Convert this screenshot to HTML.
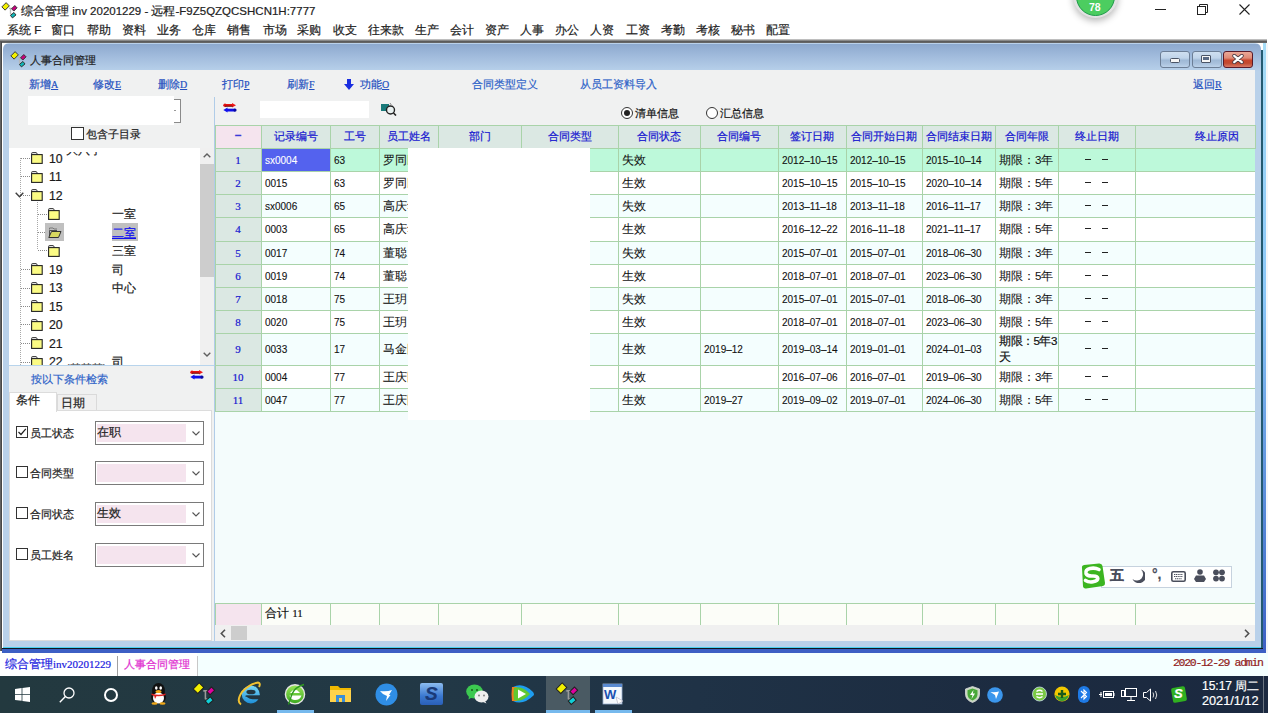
<!DOCTYPE html><html><head><meta charset="utf-8"><style>
*{box-sizing:border-box;margin:0;padding:0}
html,body{width:1268px;height:713px;overflow:hidden;background:#fff}
body{position:relative;font-family:"Liberation Sans",sans-serif;font-size:12px;color:#000}
.ab{position:absolute}
.t{position:absolute;white-space:nowrap;line-height:1;-webkit-text-stroke:0.2px currentColor}
.lnk{color:#2a55b8}
.u{text-decoration:underline}
</style></head><body>
<svg class="ab" style="left:1px;top:2px" width="17" height="17" viewBox="0 0 17 17"><path d="M8 6.3 H11.5 M9.5 6.3 V11.8 L11.3 12.6" stroke="#b8b8b8" stroke-width="1.3" fill="none"/><rect x="1.6" y="2.1" width="6" height="4.6" transform="rotate(-45 4.6 4.4)" fill="#f2f000" stroke="#303030" stroke-width="0.9"/><rect x="11" y="4.7" width="4.6" height="3.2" transform="rotate(-45 13.3 6.3)" fill="#c8007e" stroke="#303030" stroke-width="0.9"/><rect x="9.9" y="11.6" width="4.6" height="3.2" transform="rotate(-40 12.2 13.2)" fill="#10b8b8" stroke="#303030" stroke-width="0.9"/></svg>
<div class="t" style="left:21px;top:6px;font-size:11.5px;color:#222">综合管理 inv 20201229 - 远程-F9Z5QZQCSHCN1H:7777</div>
<div class="ab" style="left:1073px;top:-26.6px;width:44.8px;height:44.8px;border-radius:50%;background:#e2e2e2;box-shadow:0 3px 7px rgba(0,0,0,.28)"></div>
<div class="ab" style="left:1075.6px;top:-24px;width:39.6px;height:39.6px;border-radius:50%;background:#4ccd60;border:1px solid #1e9a4a"></div>
<div class="t" style="left:1089px;top:1.8px;font-size:10.5px;font-weight:bold;color:#fff;-webkit-text-stroke:0">78</div>
<div class="ab" style="left:1155px;top:9px;width:11px;height:1px;background:#222"></div>
<svg class="ab" style="left:1197px;top:4px" width="11" height="11"><rect x="0.5" y="2.5" width="8" height="8" fill="none" stroke="#222"/><path d="M2.5 2.5 V0.5 H10.5 V8.5 H8.5" fill="none" stroke="#222"/></svg>
<svg class="ab" style="left:1239px;top:4px" width="11" height="11"><path d="M0.5 0.5 L10.5 10.5 M10.5 0.5 L0.5 10.5" stroke="#222" stroke-width="1.1"/></svg>
<div class="t" style="left:7px;top:25px;font-size:11.5px;color:#222">系统 F</div>
<div class="t" style="left:51px;top:25px;font-size:11.5px;color:#222">窗口</div>
<div class="t" style="left:87px;top:25px;font-size:11.5px;color:#222">帮助</div>
<div class="t" style="left:122px;top:25px;font-size:11.5px;color:#222">资料</div>
<div class="t" style="left:157px;top:25px;font-size:11.5px;color:#222">业务</div>
<div class="t" style="left:192px;top:25px;font-size:11.5px;color:#222">仓库</div>
<div class="t" style="left:227px;top:25px;font-size:11.5px;color:#222">销售</div>
<div class="t" style="left:263px;top:25px;font-size:11.5px;color:#222">市场</div>
<div class="t" style="left:297px;top:25px;font-size:11.5px;color:#222">采购</div>
<div class="t" style="left:333px;top:25px;font-size:11.5px;color:#222">收支</div>
<div class="t" style="left:368px;top:25px;font-size:11.5px;color:#222">往来款</div>
<div class="t" style="left:415px;top:25px;font-size:11.5px;color:#222">生产</div>
<div class="t" style="left:450px;top:25px;font-size:11.5px;color:#222">会计</div>
<div class="t" style="left:485px;top:25px;font-size:11.5px;color:#222">资产</div>
<div class="t" style="left:520px;top:25px;font-size:11.5px;color:#222">人事</div>
<div class="t" style="left:555px;top:25px;font-size:11.5px;color:#222">办公</div>
<div class="t" style="left:590px;top:25px;font-size:11.5px;color:#222">人资</div>
<div class="t" style="left:626px;top:25px;font-size:11.5px;color:#222">工资</div>
<div class="t" style="left:661px;top:25px;font-size:11.5px;color:#222">考勤</div>
<div class="t" style="left:696px;top:25px;font-size:11.5px;color:#222">考核</div>
<div class="t" style="left:731px;top:25px;font-size:11.5px;color:#222">秘书</div>
<div class="t" style="left:766px;top:25px;font-size:11.5px;color:#222">配置</div>
<div class="ab" style="left:0;top:39px;width:1267px;height:4px;background:linear-gradient(#d8d8d8,#5a5a5a 60%,#6a6a6a)"></div>
<div class="ab" style="left:1263px;top:43px;width:3px;height:610px;background:linear-gradient(#a6dcf6 0px,#8cc8f8 250px,#4a78d0 530px,#3d5fc4 610px)"></div><div class="ab" style="left:1266px;top:43px;width:2px;height:610px;background:#f4f6f8"></div>
<div class="ab" style="left:1261px;top:50px;width:2px;height:598px;background:#245a70"></div><div class="ab" style="left:1260px;top:50px;width:1px;height:597px;background:#92d6f2"></div>
<div class="ab" style="left:0;top:42px;width:2px;height:609px;background:linear-gradient(90deg,#707070,#3a3a3a)"></div>
<div class="ab" style="left:3px;top:43px;width:1258px;height:604px;border-radius:6px 6px 0 0;background:linear-gradient(#d0e4f8 0px,#8eaacf 1.5px,#a2bcdd 14px,#b6cfe9 27px,#b9d1ea 28px,#b9d1ea 100%)"></div>
<div class="ab" style="left:3px;top:647px;width:1258px;height:1px;background:#4cd0f0"></div>
<div class="ab" style="left:2px;top:648px;width:1261px;height:1px;background:#101820"></div>
<div class="ab" style="left:2px;top:649px;width:1264px;height:4px;background:#3d5fc4"></div>
<svg class="ab" style="left:10px;top:51px" width="17" height="17" viewBox="0 0 17 17"><path d="M8 6.3 H11.5 M9.5 6.3 V11.8 L11.3 12.6" stroke="#b8b8b8" stroke-width="1.3" fill="none"/><rect x="1.6" y="2.1" width="6" height="4.6" transform="rotate(-45 4.6 4.4)" fill="#f2f000" stroke="#303030" stroke-width="0.9"/><rect x="11" y="4.7" width="4.6" height="3.2" transform="rotate(-45 13.3 6.3)" fill="#c8007e" stroke="#303030" stroke-width="0.9"/><rect x="9.9" y="11.6" width="4.6" height="3.2" transform="rotate(-40 12.2 13.2)" fill="#10b8b8" stroke="#303030" stroke-width="0.9"/></svg>
<div class="t" style="left:30px;top:54.5px;font-size:11.3px;color:#1e1e1e">人事合同管理</div>
<div class="ab" style="left:1160px;top:51px;width:30px;height:17px;border:1px solid #6c7e96;border-radius:3px;background:linear-gradient(#cfdff0 0%,#c0d4ea 40%,#9fb9d6 55%,#a8c0dc 75%,#bcd2ea 100%)"></div><div class="ab" style="left:1170px;top:58px;width:10px;height:5px;background:#f6f6f6;border:1px solid #4a5466;border-radius:1.5px"></div>
<div class="ab" style="left:1192px;top:51px;width:30px;height:17px;border:1px solid #6c7e96;border-radius:3px;background:linear-gradient(#cfdff0 0%,#c0d4ea 40%,#9fb9d6 55%,#a8c0dc 75%,#bcd2ea 100%)"></div><div class="ab" style="left:1201px;top:55px;width:10px;height:8px;background:#f6f6f6;border:1px solid #4a5466;border-radius:1px"><div style="margin:1px 1px;height:3px;background:#5a6a84"></div></div>
<div class="ab" style="left:1223px;top:51px;width:30px;height:17px;border:1px solid #5a1a28;border-radius:3px;background:linear-gradient(#eba898 0%,#e08a76 40%,#c8452c 55%,#c24a30 75%,#d87a68 100%)"></div><svg class="ab" style="left:1232px;top:54px" width="12" height="10" viewBox="0 0 12 10"><path d="M2.2 1.8 L9.8 8.2 M9.8 1.8 L2.2 8.2" stroke="#4a3a44" stroke-width="3.8" stroke-linecap="round"/><path d="M2.2 1.8 L9.8 8.2 M9.8 1.8 L2.2 8.2" stroke="#fff" stroke-width="2.2" stroke-linecap="round"/></svg>
<div class="ab" style="left:9px;top:70px;width:1246px;height:571px;background:#f0f1f1"></div>
<div class="t lnk" style="left:29px;top:79px;font-size:11.3px;color:#2350c0">新增<span class="u" style="font-family:'Liberation Serif', serif;font-size:10px">A</span></div>
<div class="t lnk" style="left:93px;top:79px;font-size:11.3px;color:#2350c0">修改<span class="u" style="font-family:'Liberation Serif', serif;font-size:10px">E</span></div>
<div class="t lnk" style="left:158px;top:79px;font-size:11.3px;color:#2350c0">删除<span class="u" style="font-family:'Liberation Serif', serif;font-size:10px">D</span></div>
<div class="t lnk" style="left:222px;top:79px;font-size:11.3px;color:#2350c0">打印<span class="u" style="font-family:'Liberation Serif', serif;font-size:10px">P</span></div>
<div class="t lnk" style="left:287px;top:79px;font-size:11.3px;color:#2350c0">刷新<span class="u" style="font-family:'Liberation Serif', serif;font-size:10px">F</span></div>
<svg class="ab" style="left:344px;top:79px" width="10" height="11" viewBox="0 0 10 11"><path d="M3 0 H7 V5 H10 L5 11 L0 5 H3 Z" fill="#1a2ee0"/></svg>
<div class="t lnk" style="left:360px;top:79px;font-size:11.3px;color:#2350c0">功能<span class="u" style="font-family:'Liberation Serif', serif;font-size:10px">O</span></div>
<div class="t" style="left:472px;top:79px;font-size:10.8px;color:#2d62c8">合同类型定义</div>
<div class="t" style="left:580px;top:79px;font-size:10.9px;color:#2d62c8">从员工资料导入</div>
<div class="t lnk" style="left:1193px;top:79px;font-size:11.3px;color:#2350c0">返回<span class="u" style="font-family:'Liberation Serif', serif;font-size:10px">R</span></div>
<div class="ab" style="left:28px;top:96px;width:146px;height:29px;background:#fff"></div>
<div class="ab" style="left:174px;top:99px;width:7px;height:24px;border:1px solid #8a8a8a;border-left:none;background:#fff"></div>
<div class="ab" style="left:174px;top:110px;width:2px;height:1px;background:#999"></div>
<div class="ab" style="left:71px;top:127px;width:13px;height:13px;border:1px solid #333;background:#fff"></div>
<div class="t" style="left:86px;top:129px;font-size:10.8px;color:#222">包含子目录</div>
<svg class="ab" style="left:223px;top:103px" width="14" height="10" viewBox="0 0 14 10"><path d="M2 2.3 H10" stroke="#e81010" stroke-width="2.6"/><path d="M9 0 L13 2.3 L9 4.6Z" fill="#f01818"/><circle cx="2" cy="2.3" r="1.7" fill="#e01010"/><path d="M2.2 3.2 H9.5" stroke="#401010" stroke-width="0.8"/><path d="M4 7.1 H12" stroke="#1010e8" stroke-width="2.8"/><path d="M4.5 4.6 L0.3 7.1 L4.5 9.6Z" fill="#1010f0"/><circle cx="12" cy="7.1" r="1.6" fill="#0808a0"/></svg>
<div class="ab" style="left:260px;top:101px;width:109px;height:17px;background:#fff"></div>
<svg class="ab" style="left:381px;top:102px" width="16" height="14" viewBox="0 0 16 14"><rect x="0" y="2" width="8" height="7" fill="#1a7a7a"/><circle cx="9.5" cy="8" r="4" fill="#e8f0f0" stroke="#222" stroke-width="1.4"/><path d="M12.5 11 L15 13.5" stroke="#222" stroke-width="1.6"/><path d="M9 1 L11 4" stroke="#888"/></svg>
<div class="ab" style="left:621px;top:107px;width:12px;height:12px;border-radius:50%;border:1px solid #333;background:#fff"></div><div class="ab" style="left:624px;top:110px;width:6px;height:6px;border-radius:50%;background:#222"></div>
<div class="t" style="left:635px;top:107.5px;font-size:11px;color:#111">清单信息</div>
<div class="ab" style="left:706px;top:107px;width:12px;height:12px;border-radius:50%;border:1px solid #333;background:#fff"></div>
<div class="t" style="left:720px;top:107.5px;font-size:11px;color:#111">汇总信息</div>
<div class="ab" style="left:214px;top:97px;width:1px;height:544px;background:#b0cce8"></div>
<div class="ab" style="left:9px;top:148px;width:191px;height:217px;background:#fff;overflow:hidden">
<div class="ab" style="left:11px;top:10px;width:1px;height:207px;background:repeating-linear-gradient(180deg,#a8a8a8 0 1px,transparent 1px 2px)"></div>
<div class="ab" style="left:28px;top:54px;width:1px;height:48px;background:repeating-linear-gradient(180deg,#a8a8a8 0 1px,transparent 1px 2px)"></div>
<div class="ab" style="left:12px;top:10px;width:9px;height:1px;background:repeating-linear-gradient(90deg,#8a8a8a 0 1px,transparent 1px 2px)"></div>
<svg class="ab" style="left:22px;top:4.4px" width="12" height="12" viewBox="0 0 12 12"><path d="M0.7 2.6 V1.2 Q0.7 0.6 1.3 0.6 H5.2 Q5.8 0.6 6.4 2.6" fill="#f4f4f4" stroke="#333" stroke-width="1"/><rect x="0.6" y="2.6" width="10.6" height="8.8" fill="#fbfb84" stroke="#222" stroke-width="1.1"/></svg>
<div class="t" style="left:40px;top:4.7px;font-size:12.3px;color:#1a1a1a">10</div>
<div class="ab" style="left:12px;top:28px;width:9px;height:1px;background:repeating-linear-gradient(90deg,#8a8a8a 0 1px,transparent 1px 2px)"></div>
<svg class="ab" style="left:22px;top:22.9px" width="12" height="12" viewBox="0 0 12 12"><path d="M0.7 2.6 V1.2 Q0.7 0.6 1.3 0.6 H5.2 Q5.8 0.6 6.4 2.6" fill="#f4f4f4" stroke="#333" stroke-width="1"/><rect x="0.6" y="2.6" width="10.6" height="8.8" fill="#fbfb84" stroke="#222" stroke-width="1.1"/></svg>
<div class="t" style="left:40px;top:23.2px;font-size:12.3px;color:#1a1a1a">11</div>
<div class="ab" style="left:12px;top:47px;width:9px;height:1px;background:repeating-linear-gradient(90deg,#8a8a8a 0 1px,transparent 1px 2px)"></div>
<svg class="ab" style="left:22px;top:41.4px" width="12" height="12" viewBox="0 0 12 12"><path d="M0.7 2.6 V1.2 Q0.7 0.6 1.3 0.6 H5.2 Q5.8 0.6 6.4 2.6" fill="#f4f4f4" stroke="#333" stroke-width="1"/><rect x="0.6" y="2.6" width="10.6" height="8.8" fill="#fbfb84" stroke="#222" stroke-width="1.1"/></svg>
<div class="t" style="left:40px;top:41.7px;font-size:12.3px;color:#1a1a1a">12</div>
<div class="ab" style="left:29px;top:66px;width:9px;height:1px;background:repeating-linear-gradient(90deg,#8a8a8a 0 1px,transparent 1px 2px)"></div>
<svg class="ab" style="left:39px;top:59.9px" width="12" height="12" viewBox="0 0 12 12"><path d="M0.7 2.6 V1.2 Q0.7 0.6 1.3 0.6 H5.2 Q5.8 0.6 6.4 2.6" fill="#f4f4f4" stroke="#333" stroke-width="1"/><rect x="0.6" y="2.6" width="10.6" height="8.8" fill="#fbfb84" stroke="#222" stroke-width="1.1"/></svg>
<div class="t" style="left:103px;top:61.2px;font-size:11.5px;color:#222">一室</div>
<div class="ab" style="left:29px;top:84px;width:9px;height:1px;background:repeating-linear-gradient(90deg,#8a8a8a 0 1px,transparent 1px 2px)"></div>
<div class="ab" style="left:36px;top:75.0px;width:19px;height:18px;background:#c0c0c0"></div>
<svg class="ab" style="left:39px;top:78.5px" width="14" height="12" viewBox="0 0 14 12"><path d="M1.5 2.5 V1 H5 L6 2 H9" fill="none" stroke="#777" stroke-width="1"/><path d="M0.8 10.5 L3.5 4.5 H13 L10.5 10.5 Z" fill="#d8d860" stroke="#333" stroke-width="1"/><path d="M1.5 9 V3.5 H9" fill="none" stroke="#333" stroke-width="0.8"/></svg>
<div class="ab" style="left:103px;top:75.0px;width:26px;height:18px;background:#c0c0c0"></div>
<div class="t" style="left:103px;top:79.7px;font-size:11.5px;color:#1010f0;text-decoration:underline">二室</div>
<div class="ab" style="left:29px;top:102px;width:9px;height:1px;background:repeating-linear-gradient(90deg,#8a8a8a 0 1px,transparent 1px 2px)"></div>
<svg class="ab" style="left:39px;top:96.9px" width="12" height="12" viewBox="0 0 12 12"><path d="M0.7 2.6 V1.2 Q0.7 0.6 1.3 0.6 H5.2 Q5.8 0.6 6.4 2.6" fill="#f4f4f4" stroke="#333" stroke-width="1"/><rect x="0.6" y="2.6" width="10.6" height="8.8" fill="#fbfb84" stroke="#222" stroke-width="1.1"/></svg>
<div class="t" style="left:103px;top:98.2px;font-size:11.5px;color:#222">三室</div>
<div class="ab" style="left:12px;top:121px;width:9px;height:1px;background:repeating-linear-gradient(90deg,#8a8a8a 0 1px,transparent 1px 2px)"></div>
<svg class="ab" style="left:22px;top:115.4px" width="12" height="12" viewBox="0 0 12 12"><path d="M0.7 2.6 V1.2 Q0.7 0.6 1.3 0.6 H5.2 Q5.8 0.6 6.4 2.6" fill="#f4f4f4" stroke="#333" stroke-width="1"/><rect x="0.6" y="2.6" width="10.6" height="8.8" fill="#fbfb84" stroke="#222" stroke-width="1.1"/></svg>
<div class="t" style="left:40px;top:115.7px;font-size:12.3px;color:#1a1a1a">19</div>
<div class="t" style="left:103px;top:116.7px;font-size:11.5px;color:#222">司</div>
<div class="ab" style="left:12px;top:140px;width:9px;height:1px;background:repeating-linear-gradient(90deg,#8a8a8a 0 1px,transparent 1px 2px)"></div>
<svg class="ab" style="left:22px;top:133.9px" width="12" height="12" viewBox="0 0 12 12"><path d="M0.7 2.6 V1.2 Q0.7 0.6 1.3 0.6 H5.2 Q5.8 0.6 6.4 2.6" fill="#f4f4f4" stroke="#333" stroke-width="1"/><rect x="0.6" y="2.6" width="10.6" height="8.8" fill="#fbfb84" stroke="#222" stroke-width="1.1"/></svg>
<div class="t" style="left:40px;top:134.2px;font-size:12.3px;color:#1a1a1a">13</div>
<div class="t" style="left:103px;top:135.2px;font-size:11.5px;color:#222">中心</div>
<div class="ab" style="left:12px;top:158px;width:9px;height:1px;background:repeating-linear-gradient(90deg,#8a8a8a 0 1px,transparent 1px 2px)"></div>
<svg class="ab" style="left:22px;top:152.4px" width="12" height="12" viewBox="0 0 12 12"><path d="M0.7 2.6 V1.2 Q0.7 0.6 1.3 0.6 H5.2 Q5.8 0.6 6.4 2.6" fill="#f4f4f4" stroke="#333" stroke-width="1"/><rect x="0.6" y="2.6" width="10.6" height="8.8" fill="#fbfb84" stroke="#222" stroke-width="1.1"/></svg>
<div class="t" style="left:40px;top:152.7px;font-size:12.3px;color:#1a1a1a">15</div>
<div class="ab" style="left:12px;top:176px;width:9px;height:1px;background:repeating-linear-gradient(90deg,#8a8a8a 0 1px,transparent 1px 2px)"></div>
<svg class="ab" style="left:22px;top:170.9px" width="12" height="12" viewBox="0 0 12 12"><path d="M0.7 2.6 V1.2 Q0.7 0.6 1.3 0.6 H5.2 Q5.8 0.6 6.4 2.6" fill="#f4f4f4" stroke="#333" stroke-width="1"/><rect x="0.6" y="2.6" width="10.6" height="8.8" fill="#fbfb84" stroke="#222" stroke-width="1.1"/></svg>
<div class="t" style="left:40px;top:171.2px;font-size:12.3px;color:#1a1a1a">20</div>
<div class="ab" style="left:12px;top:195px;width:9px;height:1px;background:repeating-linear-gradient(90deg,#8a8a8a 0 1px,transparent 1px 2px)"></div>
<svg class="ab" style="left:22px;top:189.4px" width="12" height="12" viewBox="0 0 12 12"><path d="M0.7 2.6 V1.2 Q0.7 0.6 1.3 0.6 H5.2 Q5.8 0.6 6.4 2.6" fill="#f4f4f4" stroke="#333" stroke-width="1"/><rect x="0.6" y="2.6" width="10.6" height="8.8" fill="#fbfb84" stroke="#222" stroke-width="1.1"/></svg>
<div class="t" style="left:40px;top:189.7px;font-size:12.3px;color:#1a1a1a">21</div>
<div class="ab" style="left:12px;top:214px;width:9px;height:1px;background:repeating-linear-gradient(90deg,#8a8a8a 0 1px,transparent 1px 2px)"></div>
<svg class="ab" style="left:22px;top:207.9px" width="12" height="12" viewBox="0 0 12 12"><path d="M0.7 2.6 V1.2 Q0.7 0.6 1.3 0.6 H5.2 Q5.8 0.6 6.4 2.6" fill="#f4f4f4" stroke="#333" stroke-width="1"/><rect x="0.6" y="2.6" width="10.6" height="8.8" fill="#fbfb84" stroke="#222" stroke-width="1.1"/></svg>
<div class="t" style="left:40px;top:208.2px;font-size:12.3px;color:#1a1a1a">22</div>
<div class="t" style="left:103px;top:209.2px;font-size:11.5px;color:#222">司</div>
<svg class="ab" style="left:6px;top:44px" width="9" height="6" viewBox="0 0 9 6"><path d="M0.7 0.7 L4.5 4.7 L8.3 0.7" fill="none" stroke="#404040" stroke-width="1.4"/></svg>
<div class="ab" style="left:57px;top:3.5px;width:40px;height:5px;overflow:hidden"><div class="t" style="left:0;top:-7px;font-size:11.5px;color:#222">大八字</div></div>
<div class="ab" style="left:57px;top:215px;width:42px;height:3px;overflow:hidden"><div class="t" style="left:0;top:0px;font-size:11px;color:#555">(某某某)</div></div>
</div>
<div class="ab" style="left:200px;top:148px;width:14px;height:217px;background:#f0f0f0"></div>
<div class="ab" style="left:200px;top:164px;width:14px;height:113px;background:#cdcdcd"></div>
<svg class="ab" style="left:203px;top:153px" width="8" height="5" viewBox="0 0 8 5"><path d="M0.7 4.3 L4 1 L7.3 4.3" fill="none" stroke="#606060" stroke-width="1.4"/></svg>
<svg class="ab" style="left:203px;top:352px" width="8" height="5" viewBox="0 0 8 5"><path d="M0.7 0.7 L4 4 L7.3 0.7" fill="none" stroke="#606060" stroke-width="1.4"/></svg>
<div class="ab" style="left:9px;top:365px;width:205px;height:1px;background:#b8d4ec"></div>
<div class="t" style="left:31px;top:374px;font-size:10.8px;color:#2d62c8">按以下条件检索</div>
<svg class="ab" style="left:190px;top:370px" width="14" height="10" viewBox="0 0 14 10"><path d="M2 2.3 H10" stroke="#e81010" stroke-width="2.6"/><path d="M9 0 L13 2.3 L9 4.6Z" fill="#f01818"/><circle cx="2" cy="2.3" r="1.7" fill="#e01010"/><path d="M2.2 3.2 H9.5" stroke="#401010" stroke-width="0.8"/><path d="M4 7.1 H12" stroke="#1010e8" stroke-width="2.8"/><path d="M4.5 4.6 L0.3 7.1 L4.5 9.6Z" fill="#1010f0"/><circle cx="12" cy="7.1" r="1.6" fill="#0808a0"/></svg>
<div class="ab" style="left:57px;top:394px;width:40px;height:17px;background:#f0f0f0;border:1px solid #dadada;border-bottom:none"></div>
<div class="t" style="left:61px;top:398px;font-size:11.5px;color:#222">日期</div>
<div class="ab" style="left:9px;top:410px;width:203px;height:231px;background:#fff;border:1px solid #dcdcdc;border-top:1px solid #dcdcdc"></div>
<div class="ab" style="left:9px;top:392px;width:48px;height:20px;background:#fff;border:1px solid #dcdcdc;border-bottom:none"></div>
<div class="t" style="left:16px;top:395px;font-size:11.5px;color:#222">条件</div>
<div class="ab" style="left:16px;top:426px;width:12px;height:12px;border:1px solid #333;background:#fff"></div>
<svg class="ab" style="left:17px;top:427px" width="10" height="10" viewBox="0 0 10 10"><path d="M1.5 5 L4 7.5 L8.8 1.8" fill="none" stroke="#222" stroke-width="1.2"/></svg>
<div class="t" style="left:30px;top:428px;font-size:11px;color:#222">员工状态</div>
<div class="ab" style="left:95px;top:421px;width:109px;height:24px;border:1px solid #7a7a7a;background:#fff"></div>
<div class="ab" style="left:97px;top:424px;width:89px;height:18px;background:#f5e4ee"></div>
<div class="t" style="left:97px;top:427px;font-size:11.5px;color:#222">在职</div>
<svg class="ab" style="left:192px;top:431px" width="8" height="5" viewBox="0 0 8 5"><path d="M0.5 0.5 L4 4 L7.5 0.5" fill="none" stroke="#555" stroke-width="1.1"/></svg>
<div class="ab" style="left:16px;top:466px;width:12px;height:12px;border:1px solid #333;background:#fff"></div>
<div class="t" style="left:30px;top:468px;font-size:11px;color:#222">合同类型</div>
<div class="ab" style="left:95px;top:461px;width:109px;height:24px;border:1px solid #7a7a7a;background:#fff"></div>
<div class="ab" style="left:97px;top:464px;width:89px;height:18px;background:#f5e4ee"></div>
<svg class="ab" style="left:192px;top:471px" width="8" height="5" viewBox="0 0 8 5"><path d="M0.5 0.5 L4 4 L7.5 0.5" fill="none" stroke="#555" stroke-width="1.1"/></svg>
<div class="ab" style="left:16px;top:507px;width:12px;height:12px;border:1px solid #333;background:#fff"></div>
<div class="t" style="left:30px;top:509px;font-size:11px;color:#222">合同状态</div>
<div class="ab" style="left:95px;top:502px;width:109px;height:24px;border:1px solid #7a7a7a;background:#fff"></div>
<div class="ab" style="left:97px;top:505px;width:89px;height:18px;background:#f5e4ee"></div>
<div class="t" style="left:97px;top:508px;font-size:11.5px;color:#222">生效</div>
<svg class="ab" style="left:192px;top:512px" width="8" height="5" viewBox="0 0 8 5"><path d="M0.5 0.5 L4 4 L7.5 0.5" fill="none" stroke="#555" stroke-width="1.1"/></svg>
<div class="ab" style="left:16px;top:548px;width:12px;height:12px;border:1px solid #333;background:#fff"></div>
<div class="t" style="left:30px;top:550px;font-size:11px;color:#222">员工姓名</div>
<div class="ab" style="left:95px;top:543px;width:109px;height:24px;border:1px solid #7a7a7a;background:#fff"></div>
<div class="ab" style="left:97px;top:546px;width:89px;height:18px;background:#f5e4ee"></div>
<svg class="ab" style="left:192px;top:553px" width="8" height="5" viewBox="0 0 8 5"><path d="M0.5 0.5 L4 4 L7.5 0.5" fill="none" stroke="#555" stroke-width="1.1"/></svg>
<div class="ab" style="left:215px;top:125px;width:1040px;height:500px;background:#f4fcfc"></div>
<div class="ab" style="left:215px;top:125px;width:47px;height:24px;background:#f5e4ee;border:1px solid #a9d3a9"></div>
<div class="t" style="left:215px;top:129px;width:46px;text-align:center;font-size:12px;font-weight:bold;color:#3a3ad8">–</div>
<div class="ab" style="left:261px;top:125px;width:70px;height:24px;background:#dbe8e3;border:1px solid #a9d3a9"></div>
<div class="t" style="left:261px;top:131px;width:69px;text-align:center;font-size:11px;color:#1616d0">记录编号</div>
<div class="ab" style="left:330px;top:125px;width:50px;height:24px;background:#dbe8e3;border:1px solid #a9d3a9"></div>
<div class="t" style="left:330px;top:131px;width:49px;text-align:center;font-size:11px;color:#1616d0">工号</div>
<div class="ab" style="left:379px;top:125px;width:60px;height:24px;background:#dbe8e3;border:1px solid #a9d3a9"></div>
<div class="t" style="left:379px;top:131px;width:59px;text-align:center;font-size:11px;color:#1616d0">员工姓名</div>
<div class="ab" style="left:438px;top:125px;width:84px;height:24px;background:#dbe8e3;border:1px solid #a9d3a9"></div>
<div class="t" style="left:438px;top:131px;width:83px;text-align:center;font-size:11px;color:#1616d0">部门</div>
<div class="ab" style="left:521px;top:125px;width:98px;height:24px;background:#dbe8e3;border:1px solid #a9d3a9"></div>
<div class="t" style="left:521px;top:131px;width:97px;text-align:center;font-size:11px;color:#1616d0">合同类型</div>
<div class="ab" style="left:618px;top:125px;width:83px;height:24px;background:#dbe8e3;border:1px solid #a9d3a9"></div>
<div class="t" style="left:618px;top:131px;width:82px;text-align:center;font-size:11px;color:#1616d0">合同状态</div>
<div class="ab" style="left:700px;top:125px;width:79px;height:24px;background:#dbe8e3;border:1px solid #a9d3a9"></div>
<div class="t" style="left:700px;top:131px;width:78px;text-align:center;font-size:11px;color:#1616d0">合同编号</div>
<div class="ab" style="left:778px;top:125px;width:69px;height:24px;background:#dbe8e3;border:1px solid #a9d3a9"></div>
<div class="t" style="left:778px;top:131px;width:68px;text-align:center;font-size:11px;color:#1616d0">签订日期</div>
<div class="ab" style="left:846px;top:125px;width:77px;height:24px;background:#dbe8e3;border:1px solid #a9d3a9"></div>
<div class="t" style="left:846px;top:131px;width:76px;text-align:center;font-size:11px;color:#1616d0">合同开始日期</div>
<div class="ab" style="left:922px;top:125px;width:74px;height:24px;background:#dbe8e3;border:1px solid #a9d3a9"></div>
<div class="t" style="left:922px;top:131px;width:73px;text-align:center;font-size:11px;color:#1616d0">合同结束日期</div>
<div class="ab" style="left:995px;top:125px;width:64px;height:24px;background:#dbe8e3;border:1px solid #a9d3a9"></div>
<div class="t" style="left:995px;top:131px;width:63px;text-align:center;font-size:11px;color:#1616d0">合同年限</div>
<div class="ab" style="left:1058px;top:125px;width:78px;height:24px;background:#dbe8e3;border:1px solid #a9d3a9"></div>
<div class="t" style="left:1058px;top:131px;width:77px;text-align:center;font-size:11px;color:#1616d0">终止日期</div>
<div class="ab" style="left:1135px;top:125px;width:121px;height:24px;background:#dbe8e3;border:1px solid #a9d3a9"></div>
<div class="t" style="left:1195px;top:131px;font-size:11px;color:#1616d0">终止原因</div>
<div class="ab" style="left:261px;top:148px;width:994px;height:24px;background:#bdf9da;border-bottom:1px solid #a9d3a9"></div>
<div class="ab" style="left:215px;top:148px;width:47px;height:24px;background:#dbe8e3;border:1px solid #a9d3a9;border-top:none"></div>
<div class="t" style="left:215px;top:154.5px;width:46px;text-align:center;font-family:'Liberation Serif', serif;font-size:11px;color:#1616d0">1</div>
<div class="ab" style="left:262px;top:148px;width:68px;height:23px;background:#5462ee"></div>
<div class="t" style="left:265px;top:155.9px;font-family:'Liberation Sans', sans-serif;font-size:10px;-webkit-text-stroke:0.1px currentColor;color:#fff">sx0004</div>
<div class="t" style="left:334px;top:155.9px;font-family:'Liberation Sans', sans-serif;font-size:10px;-webkit-text-stroke:0.1px currentColor;color:#111">63</div>
<div class="t" style="left:383px;top:154.5px;font-size:11.5px;color:#111;-webkit-text-stroke:0.05px currentColor">罗同民</div>
<div class="t" style="left:622px;top:154.5px;font-size:11.5px;color:#111;-webkit-text-stroke:0.05px currentColor">失效</div>
<div class="t" style="left:704px;top:155.9px;font-family:'Liberation Sans', sans-serif;font-size:10px;-webkit-text-stroke:0.1px currentColor;color:#111"></div>
<div class="t" style="left:782px;top:155.9px;font-family:'Liberation Sans', sans-serif;font-size:10px;-webkit-text-stroke:0.1px currentColor;color:#111">2012–10–15</div>
<div class="t" style="left:850px;top:155.9px;font-family:'Liberation Sans', sans-serif;font-size:10px;-webkit-text-stroke:0.1px currentColor;color:#111">2012–10–15</div>
<div class="t" style="left:926px;top:155.9px;font-family:'Liberation Sans', sans-serif;font-size:10px;-webkit-text-stroke:0.1px currentColor;color:#111">2015–10–14</div>
<div class="t" style="left:999px;top:154.5px;font-size:11.5px;color:#111;-webkit-text-stroke:0.05px currentColor">期限：3年</div>
<div class="ab" style="left:1085px;top:159px;width:6px;height:1px;background:#222"></div>
<div class="ab" style="left:1102px;top:159px;width:6px;height:1px;background:#222"></div>
<div class="ab" style="left:261px;top:171px;width:994px;height:24px;background:#ffffff;border-bottom:1px solid #a9d3a9"></div>
<div class="ab" style="left:215px;top:171px;width:47px;height:24px;background:#dbe8e3;border:1px solid #a9d3a9;border-top:none"></div>
<div class="t" style="left:215px;top:177.5px;width:46px;text-align:center;font-family:'Liberation Serif', serif;font-size:11px;color:#1616d0">2</div>
<div class="t" style="left:265px;top:178.9px;font-family:'Liberation Sans', sans-serif;font-size:10px;-webkit-text-stroke:0.1px currentColor;color:#111">0015</div>
<div class="t" style="left:334px;top:178.9px;font-family:'Liberation Sans', sans-serif;font-size:10px;-webkit-text-stroke:0.1px currentColor;color:#111">63</div>
<div class="t" style="left:383px;top:177.5px;font-size:11.5px;color:#111;-webkit-text-stroke:0.05px currentColor">罗同民</div>
<div class="t" style="left:622px;top:177.5px;font-size:11.5px;color:#111;-webkit-text-stroke:0.05px currentColor">生效</div>
<div class="t" style="left:704px;top:178.9px;font-family:'Liberation Sans', sans-serif;font-size:10px;-webkit-text-stroke:0.1px currentColor;color:#111"></div>
<div class="t" style="left:782px;top:178.9px;font-family:'Liberation Sans', sans-serif;font-size:10px;-webkit-text-stroke:0.1px currentColor;color:#111">2015–10–15</div>
<div class="t" style="left:850px;top:178.9px;font-family:'Liberation Sans', sans-serif;font-size:10px;-webkit-text-stroke:0.1px currentColor;color:#111">2015–10–15</div>
<div class="t" style="left:926px;top:178.9px;font-family:'Liberation Sans', sans-serif;font-size:10px;-webkit-text-stroke:0.1px currentColor;color:#111">2020–10–14</div>
<div class="t" style="left:999px;top:177.5px;font-size:11.5px;color:#111;-webkit-text-stroke:0.05px currentColor">期限：5年</div>
<div class="ab" style="left:1085px;top:182px;width:6px;height:1px;background:#222"></div>
<div class="ab" style="left:1102px;top:182px;width:6px;height:1px;background:#222"></div>
<div class="ab" style="left:261px;top:194px;width:994px;height:24px;background:#f4fefe;border-bottom:1px solid #a9d3a9"></div>
<div class="ab" style="left:215px;top:194px;width:47px;height:24px;background:#dbe8e3;border:1px solid #a9d3a9;border-top:none"></div>
<div class="t" style="left:215px;top:200.5px;width:46px;text-align:center;font-family:'Liberation Serif', serif;font-size:11px;color:#1616d0">3</div>
<div class="t" style="left:265px;top:201.9px;font-family:'Liberation Sans', sans-serif;font-size:10px;-webkit-text-stroke:0.1px currentColor;color:#111">sx0006</div>
<div class="t" style="left:334px;top:201.9px;font-family:'Liberation Sans', sans-serif;font-size:10px;-webkit-text-stroke:0.1px currentColor;color:#111">65</div>
<div class="t" style="left:383px;top:200.5px;font-size:11.5px;color:#111;-webkit-text-stroke:0.05px currentColor">高庆华</div>
<div class="t" style="left:622px;top:200.5px;font-size:11.5px;color:#111;-webkit-text-stroke:0.05px currentColor">失效</div>
<div class="t" style="left:704px;top:201.9px;font-family:'Liberation Sans', sans-serif;font-size:10px;-webkit-text-stroke:0.1px currentColor;color:#111"></div>
<div class="t" style="left:782px;top:201.9px;font-family:'Liberation Sans', sans-serif;font-size:10px;-webkit-text-stroke:0.1px currentColor;color:#111">2013–11–18</div>
<div class="t" style="left:850px;top:201.9px;font-family:'Liberation Sans', sans-serif;font-size:10px;-webkit-text-stroke:0.1px currentColor;color:#111">2013–11–18</div>
<div class="t" style="left:926px;top:201.9px;font-family:'Liberation Sans', sans-serif;font-size:10px;-webkit-text-stroke:0.1px currentColor;color:#111">2016–11–17</div>
<div class="t" style="left:999px;top:200.5px;font-size:11.5px;color:#111;-webkit-text-stroke:0.05px currentColor">期限：3年</div>
<div class="ab" style="left:1085px;top:205px;width:6px;height:1px;background:#222"></div>
<div class="ab" style="left:1102px;top:205px;width:6px;height:1px;background:#222"></div>
<div class="ab" style="left:261px;top:217px;width:994px;height:25px;background:#ffffff;border-bottom:1px solid #a9d3a9"></div>
<div class="ab" style="left:215px;top:217px;width:47px;height:25px;background:#dbe8e3;border:1px solid #a9d3a9;border-top:none"></div>
<div class="t" style="left:215px;top:224.0px;width:46px;text-align:center;font-family:'Liberation Serif', serif;font-size:11px;color:#1616d0">4</div>
<div class="t" style="left:265px;top:225.4px;font-family:'Liberation Sans', sans-serif;font-size:10px;-webkit-text-stroke:0.1px currentColor;color:#111">0003</div>
<div class="t" style="left:334px;top:225.4px;font-family:'Liberation Sans', sans-serif;font-size:10px;-webkit-text-stroke:0.1px currentColor;color:#111">65</div>
<div class="t" style="left:383px;top:224.0px;font-size:11.5px;color:#111;-webkit-text-stroke:0.05px currentColor">高庆华</div>
<div class="t" style="left:622px;top:224.0px;font-size:11.5px;color:#111;-webkit-text-stroke:0.05px currentColor">生效</div>
<div class="t" style="left:704px;top:225.4px;font-family:'Liberation Sans', sans-serif;font-size:10px;-webkit-text-stroke:0.1px currentColor;color:#111"></div>
<div class="t" style="left:782px;top:225.4px;font-family:'Liberation Sans', sans-serif;font-size:10px;-webkit-text-stroke:0.1px currentColor;color:#111">2016–12–22</div>
<div class="t" style="left:850px;top:225.4px;font-family:'Liberation Sans', sans-serif;font-size:10px;-webkit-text-stroke:0.1px currentColor;color:#111">2016–11–18</div>
<div class="t" style="left:926px;top:225.4px;font-family:'Liberation Sans', sans-serif;font-size:10px;-webkit-text-stroke:0.1px currentColor;color:#111">2021–11–17</div>
<div class="t" style="left:999px;top:224.0px;font-size:11.5px;color:#111;-webkit-text-stroke:0.05px currentColor">期限：5年</div>
<div class="ab" style="left:1085px;top:228px;width:6px;height:1px;background:#222"></div>
<div class="ab" style="left:1102px;top:228px;width:6px;height:1px;background:#222"></div>
<div class="ab" style="left:261px;top:241px;width:994px;height:24px;background:#f4fefe;border-bottom:1px solid #a9d3a9"></div>
<div class="ab" style="left:215px;top:241px;width:47px;height:24px;background:#dbe8e3;border:1px solid #a9d3a9;border-top:none"></div>
<div class="t" style="left:215px;top:247.5px;width:46px;text-align:center;font-family:'Liberation Serif', serif;font-size:11px;color:#1616d0">5</div>
<div class="t" style="left:265px;top:248.9px;font-family:'Liberation Sans', sans-serif;font-size:10px;-webkit-text-stroke:0.1px currentColor;color:#111">0017</div>
<div class="t" style="left:334px;top:248.9px;font-family:'Liberation Sans', sans-serif;font-size:10px;-webkit-text-stroke:0.1px currentColor;color:#111">74</div>
<div class="t" style="left:383px;top:247.5px;font-size:11.5px;color:#111;-webkit-text-stroke:0.05px currentColor">董聪</div>
<div class="t" style="left:622px;top:247.5px;font-size:11.5px;color:#111;-webkit-text-stroke:0.05px currentColor">失效</div>
<div class="t" style="left:704px;top:248.9px;font-family:'Liberation Sans', sans-serif;font-size:10px;-webkit-text-stroke:0.1px currentColor;color:#111"></div>
<div class="t" style="left:782px;top:248.9px;font-family:'Liberation Sans', sans-serif;font-size:10px;-webkit-text-stroke:0.1px currentColor;color:#111">2015–07–01</div>
<div class="t" style="left:850px;top:248.9px;font-family:'Liberation Sans', sans-serif;font-size:10px;-webkit-text-stroke:0.1px currentColor;color:#111">2015–07–01</div>
<div class="t" style="left:926px;top:248.9px;font-family:'Liberation Sans', sans-serif;font-size:10px;-webkit-text-stroke:0.1px currentColor;color:#111">2018–06–30</div>
<div class="t" style="left:999px;top:247.5px;font-size:11.5px;color:#111;-webkit-text-stroke:0.05px currentColor">期限：3年</div>
<div class="ab" style="left:1085px;top:252px;width:6px;height:1px;background:#222"></div>
<div class="ab" style="left:1102px;top:252px;width:6px;height:1px;background:#222"></div>
<div class="ab" style="left:261px;top:264px;width:994px;height:24px;background:#ffffff;border-bottom:1px solid #a9d3a9"></div>
<div class="ab" style="left:215px;top:264px;width:47px;height:24px;background:#dbe8e3;border:1px solid #a9d3a9;border-top:none"></div>
<div class="t" style="left:215px;top:270.5px;width:46px;text-align:center;font-family:'Liberation Serif', serif;font-size:11px;color:#1616d0">6</div>
<div class="t" style="left:265px;top:271.9px;font-family:'Liberation Sans', sans-serif;font-size:10px;-webkit-text-stroke:0.1px currentColor;color:#111">0019</div>
<div class="t" style="left:334px;top:271.9px;font-family:'Liberation Sans', sans-serif;font-size:10px;-webkit-text-stroke:0.1px currentColor;color:#111">74</div>
<div class="t" style="left:383px;top:270.5px;font-size:11.5px;color:#111;-webkit-text-stroke:0.05px currentColor">董聪</div>
<div class="t" style="left:622px;top:270.5px;font-size:11.5px;color:#111;-webkit-text-stroke:0.05px currentColor">生效</div>
<div class="t" style="left:704px;top:271.9px;font-family:'Liberation Sans', sans-serif;font-size:10px;-webkit-text-stroke:0.1px currentColor;color:#111"></div>
<div class="t" style="left:782px;top:271.9px;font-family:'Liberation Sans', sans-serif;font-size:10px;-webkit-text-stroke:0.1px currentColor;color:#111">2018–07–01</div>
<div class="t" style="left:850px;top:271.9px;font-family:'Liberation Sans', sans-serif;font-size:10px;-webkit-text-stroke:0.1px currentColor;color:#111">2018–07–01</div>
<div class="t" style="left:926px;top:271.9px;font-family:'Liberation Sans', sans-serif;font-size:10px;-webkit-text-stroke:0.1px currentColor;color:#111">2023–06–30</div>
<div class="t" style="left:999px;top:270.5px;font-size:11.5px;color:#111;-webkit-text-stroke:0.05px currentColor">期限：5年</div>
<div class="ab" style="left:1085px;top:275px;width:6px;height:1px;background:#222"></div>
<div class="ab" style="left:1102px;top:275px;width:6px;height:1px;background:#222"></div>
<div class="ab" style="left:261px;top:287px;width:994px;height:24px;background:#f4fefe;border-bottom:1px solid #a9d3a9"></div>
<div class="ab" style="left:215px;top:287px;width:47px;height:24px;background:#dbe8e3;border:1px solid #a9d3a9;border-top:none"></div>
<div class="t" style="left:215px;top:293.5px;width:46px;text-align:center;font-family:'Liberation Serif', serif;font-size:11px;color:#1616d0">7</div>
<div class="t" style="left:265px;top:294.9px;font-family:'Liberation Sans', sans-serif;font-size:10px;-webkit-text-stroke:0.1px currentColor;color:#111">0018</div>
<div class="t" style="left:334px;top:294.9px;font-family:'Liberation Sans', sans-serif;font-size:10px;-webkit-text-stroke:0.1px currentColor;color:#111">75</div>
<div class="t" style="left:383px;top:293.5px;font-size:11.5px;color:#111;-webkit-text-stroke:0.05px currentColor">王玥</div>
<div class="t" style="left:622px;top:293.5px;font-size:11.5px;color:#111;-webkit-text-stroke:0.05px currentColor">失效</div>
<div class="t" style="left:704px;top:294.9px;font-family:'Liberation Sans', sans-serif;font-size:10px;-webkit-text-stroke:0.1px currentColor;color:#111"></div>
<div class="t" style="left:782px;top:294.9px;font-family:'Liberation Sans', sans-serif;font-size:10px;-webkit-text-stroke:0.1px currentColor;color:#111">2015–07–01</div>
<div class="t" style="left:850px;top:294.9px;font-family:'Liberation Sans', sans-serif;font-size:10px;-webkit-text-stroke:0.1px currentColor;color:#111">2015–07–01</div>
<div class="t" style="left:926px;top:294.9px;font-family:'Liberation Sans', sans-serif;font-size:10px;-webkit-text-stroke:0.1px currentColor;color:#111">2018–06–30</div>
<div class="t" style="left:999px;top:293.5px;font-size:11.5px;color:#111;-webkit-text-stroke:0.05px currentColor">期限：3年</div>
<div class="ab" style="left:1085px;top:298px;width:6px;height:1px;background:#222"></div>
<div class="ab" style="left:1102px;top:298px;width:6px;height:1px;background:#222"></div>
<div class="ab" style="left:261px;top:310px;width:994px;height:24px;background:#ffffff;border-bottom:1px solid #a9d3a9"></div>
<div class="ab" style="left:215px;top:310px;width:47px;height:24px;background:#dbe8e3;border:1px solid #a9d3a9;border-top:none"></div>
<div class="t" style="left:215px;top:316.5px;width:46px;text-align:center;font-family:'Liberation Serif', serif;font-size:11px;color:#1616d0">8</div>
<div class="t" style="left:265px;top:317.9px;font-family:'Liberation Sans', sans-serif;font-size:10px;-webkit-text-stroke:0.1px currentColor;color:#111">0020</div>
<div class="t" style="left:334px;top:317.9px;font-family:'Liberation Sans', sans-serif;font-size:10px;-webkit-text-stroke:0.1px currentColor;color:#111">75</div>
<div class="t" style="left:383px;top:316.5px;font-size:11.5px;color:#111;-webkit-text-stroke:0.05px currentColor">王玥</div>
<div class="t" style="left:622px;top:316.5px;font-size:11.5px;color:#111;-webkit-text-stroke:0.05px currentColor">生效</div>
<div class="t" style="left:704px;top:317.9px;font-family:'Liberation Sans', sans-serif;font-size:10px;-webkit-text-stroke:0.1px currentColor;color:#111"></div>
<div class="t" style="left:782px;top:317.9px;font-family:'Liberation Sans', sans-serif;font-size:10px;-webkit-text-stroke:0.1px currentColor;color:#111">2018–07–01</div>
<div class="t" style="left:850px;top:317.9px;font-family:'Liberation Sans', sans-serif;font-size:10px;-webkit-text-stroke:0.1px currentColor;color:#111">2018–07–01</div>
<div class="t" style="left:926px;top:317.9px;font-family:'Liberation Sans', sans-serif;font-size:10px;-webkit-text-stroke:0.1px currentColor;color:#111">2023–06–30</div>
<div class="t" style="left:999px;top:316.5px;font-size:11.5px;color:#111;-webkit-text-stroke:0.05px currentColor">期限：5年</div>
<div class="ab" style="left:1085px;top:321px;width:6px;height:1px;background:#222"></div>
<div class="ab" style="left:1102px;top:321px;width:6px;height:1px;background:#222"></div>
<div class="ab" style="left:261px;top:333px;width:994px;height:33px;background:#f4fefe;border-bottom:1px solid #a9d3a9"></div>
<div class="ab" style="left:215px;top:333px;width:47px;height:33px;background:#dbe8e3;border:1px solid #a9d3a9;border-top:none"></div>
<div class="t" style="left:215px;top:344.0px;width:46px;text-align:center;font-family:'Liberation Serif', serif;font-size:11px;color:#1616d0">9</div>
<div class="t" style="left:265px;top:345.4px;font-family:'Liberation Sans', sans-serif;font-size:10px;-webkit-text-stroke:0.1px currentColor;color:#111">0033</div>
<div class="t" style="left:334px;top:345.4px;font-family:'Liberation Sans', sans-serif;font-size:10px;-webkit-text-stroke:0.1px currentColor;color:#111">17</div>
<div class="t" style="left:383px;top:344.0px;font-size:11.5px;color:#111;-webkit-text-stroke:0.05px currentColor">马金国</div>
<div class="t" style="left:622px;top:344.0px;font-size:11.5px;color:#111;-webkit-text-stroke:0.05px currentColor">生效</div>
<div class="t" style="left:704px;top:345.4px;font-family:'Liberation Sans', sans-serif;font-size:10px;-webkit-text-stroke:0.1px currentColor;color:#111">2019–12</div>
<div class="t" style="left:782px;top:345.4px;font-family:'Liberation Sans', sans-serif;font-size:10px;-webkit-text-stroke:0.1px currentColor;color:#111">2019–03–14</div>
<div class="t" style="left:850px;top:345.4px;font-family:'Liberation Sans', sans-serif;font-size:10px;-webkit-text-stroke:0.1px currentColor;color:#111">2019–01–01</div>
<div class="t" style="left:926px;top:345.4px;font-family:'Liberation Sans', sans-serif;font-size:10px;-webkit-text-stroke:0.1px currentColor;color:#111">2024–01–03</div>
<div class="t" style="left:999px;top:336px;font-size:11.5px;letter-spacing:-0.5px;color:#111">期限：5年3</div>
<div class="t" style="left:999px;top:352px;font-size:11.5px;color:#111">天</div>
<div class="ab" style="left:1085px;top:348px;width:6px;height:1px;background:#222"></div>
<div class="ab" style="left:1102px;top:348px;width:6px;height:1px;background:#222"></div>
<div class="ab" style="left:261px;top:365px;width:994px;height:24px;background:#ffffff;border-bottom:1px solid #a9d3a9"></div>
<div class="ab" style="left:215px;top:365px;width:47px;height:24px;background:#dbe8e3;border:1px solid #a9d3a9;border-top:none"></div>
<div class="t" style="left:215px;top:371.5px;width:46px;text-align:center;font-family:'Liberation Serif', serif;font-size:11px;color:#1616d0">10</div>
<div class="t" style="left:265px;top:372.9px;font-family:'Liberation Sans', sans-serif;font-size:10px;-webkit-text-stroke:0.1px currentColor;color:#111">0004</div>
<div class="t" style="left:334px;top:372.9px;font-family:'Liberation Sans', sans-serif;font-size:10px;-webkit-text-stroke:0.1px currentColor;color:#111">77</div>
<div class="t" style="left:383px;top:371.5px;font-size:11.5px;color:#111;-webkit-text-stroke:0.05px currentColor">王庆国</div>
<div class="t" style="left:622px;top:371.5px;font-size:11.5px;color:#111;-webkit-text-stroke:0.05px currentColor">失效</div>
<div class="t" style="left:704px;top:372.9px;font-family:'Liberation Sans', sans-serif;font-size:10px;-webkit-text-stroke:0.1px currentColor;color:#111"></div>
<div class="t" style="left:782px;top:372.9px;font-family:'Liberation Sans', sans-serif;font-size:10px;-webkit-text-stroke:0.1px currentColor;color:#111">2016–07–06</div>
<div class="t" style="left:850px;top:372.9px;font-family:'Liberation Sans', sans-serif;font-size:10px;-webkit-text-stroke:0.1px currentColor;color:#111">2016–07–01</div>
<div class="t" style="left:926px;top:372.9px;font-family:'Liberation Sans', sans-serif;font-size:10px;-webkit-text-stroke:0.1px currentColor;color:#111">2019–06–30</div>
<div class="t" style="left:999px;top:371.5px;font-size:11.5px;color:#111;-webkit-text-stroke:0.05px currentColor">期限：3年</div>
<div class="ab" style="left:1085px;top:376px;width:6px;height:1px;background:#222"></div>
<div class="ab" style="left:1102px;top:376px;width:6px;height:1px;background:#222"></div>
<div class="ab" style="left:261px;top:388px;width:994px;height:24px;background:#f4fefe;border-bottom:1px solid #a9d3a9"></div>
<div class="ab" style="left:215px;top:388px;width:47px;height:24px;background:#dbe8e3;border:1px solid #a9d3a9;border-top:none"></div>
<div class="t" style="left:215px;top:394.5px;width:46px;text-align:center;font-family:'Liberation Serif', serif;font-size:11px;color:#1616d0">11</div>
<div class="t" style="left:265px;top:395.9px;font-family:'Liberation Sans', sans-serif;font-size:10px;-webkit-text-stroke:0.1px currentColor;color:#111">0047</div>
<div class="t" style="left:334px;top:395.9px;font-family:'Liberation Sans', sans-serif;font-size:10px;-webkit-text-stroke:0.1px currentColor;color:#111">77</div>
<div class="t" style="left:383px;top:394.5px;font-size:11.5px;color:#111;-webkit-text-stroke:0.05px currentColor">王庆国</div>
<div class="t" style="left:622px;top:394.5px;font-size:11.5px;color:#111;-webkit-text-stroke:0.05px currentColor">生效</div>
<div class="t" style="left:704px;top:395.9px;font-family:'Liberation Sans', sans-serif;font-size:10px;-webkit-text-stroke:0.1px currentColor;color:#111">2019–27</div>
<div class="t" style="left:782px;top:395.9px;font-family:'Liberation Sans', sans-serif;font-size:10px;-webkit-text-stroke:0.1px currentColor;color:#111">2019–09–02</div>
<div class="t" style="left:850px;top:395.9px;font-family:'Liberation Sans', sans-serif;font-size:10px;-webkit-text-stroke:0.1px currentColor;color:#111">2019–07–01</div>
<div class="t" style="left:926px;top:395.9px;font-family:'Liberation Sans', sans-serif;font-size:10px;-webkit-text-stroke:0.1px currentColor;color:#111">2024–06–30</div>
<div class="t" style="left:999px;top:394.5px;font-size:11.5px;color:#111;-webkit-text-stroke:0.05px currentColor">期限：5年</div>
<div class="ab" style="left:1085px;top:399px;width:6px;height:1px;background:#222"></div>
<div class="ab" style="left:1102px;top:399px;width:6px;height:1px;background:#222"></div>
<div class="ab" style="left:215px;top:148px;width:1040px;height:1px;background:#a9d3a9"></div>
<div class="ab" style="left:215px;top:171px;width:1040px;height:1px;background:#a9d3a9"></div>
<div class="ab" style="left:215px;top:194px;width:1040px;height:1px;background:#a9d3a9"></div>
<div class="ab" style="left:215px;top:217px;width:1040px;height:1px;background:#a9d3a9"></div>
<div class="ab" style="left:215px;top:241px;width:1040px;height:1px;background:#a9d3a9"></div>
<div class="ab" style="left:215px;top:264px;width:1040px;height:1px;background:#a9d3a9"></div>
<div class="ab" style="left:215px;top:287px;width:1040px;height:1px;background:#a9d3a9"></div>
<div class="ab" style="left:215px;top:310px;width:1040px;height:1px;background:#a9d3a9"></div>
<div class="ab" style="left:215px;top:333px;width:1040px;height:1px;background:#a9d3a9"></div>
<div class="ab" style="left:215px;top:365px;width:1040px;height:1px;background:#a9d3a9"></div>
<div class="ab" style="left:215px;top:388px;width:1040px;height:1px;background:#a9d3a9"></div>
<div class="ab" style="left:215px;top:411px;width:1040px;height:1px;background:#a9d3a9"></div>
<div class="ab" style="left:261px;top:148px;width:1px;height:263px;background:#a9d3a9"></div>
<div class="ab" style="left:330px;top:148px;width:1px;height:263px;background:#a9d3a9"></div>
<div class="ab" style="left:379px;top:148px;width:1px;height:263px;background:#a9d3a9"></div>
<div class="ab" style="left:438px;top:148px;width:1px;height:263px;background:#a9d3a9"></div>
<div class="ab" style="left:521px;top:148px;width:1px;height:263px;background:#a9d3a9"></div>
<div class="ab" style="left:618px;top:148px;width:1px;height:263px;background:#a9d3a9"></div>
<div class="ab" style="left:700px;top:148px;width:1px;height:263px;background:#a9d3a9"></div>
<div class="ab" style="left:778px;top:148px;width:1px;height:263px;background:#a9d3a9"></div>
<div class="ab" style="left:846px;top:148px;width:1px;height:263px;background:#a9d3a9"></div>
<div class="ab" style="left:922px;top:148px;width:1px;height:263px;background:#a9d3a9"></div>
<div class="ab" style="left:995px;top:148px;width:1px;height:263px;background:#a9d3a9"></div>
<div class="ab" style="left:1058px;top:148px;width:1px;height:263px;background:#a9d3a9"></div>
<div class="ab" style="left:1135px;top:148px;width:1px;height:263px;background:#a9d3a9"></div>
<div class="ab" style="left:408px;top:148px;width:182px;height:272px;background:#fff"></div>
<div class="ab" style="left:215px;top:603px;width:1040px;height:22px;background:#fcfdf8;border-top:1px solid #a9d3a9"></div>
<div class="ab" style="left:215px;top:603px;width:47px;height:22px;background:#f5e4ee;border:1px solid #a9d3a9;border-bottom:none"></div>
<div class="ab" style="left:261px;top:603px;width:1px;height:22px;background:#a9d3a9"></div>
<div class="ab" style="left:330px;top:603px;width:1px;height:22px;background:#a9d3a9"></div>
<div class="ab" style="left:379px;top:603px;width:1px;height:22px;background:#a9d3a9"></div>
<div class="ab" style="left:438px;top:603px;width:1px;height:22px;background:#a9d3a9"></div>
<div class="ab" style="left:521px;top:603px;width:1px;height:22px;background:#a9d3a9"></div>
<div class="ab" style="left:618px;top:603px;width:1px;height:22px;background:#a9d3a9"></div>
<div class="ab" style="left:700px;top:603px;width:1px;height:22px;background:#a9d3a9"></div>
<div class="ab" style="left:778px;top:603px;width:1px;height:22px;background:#a9d3a9"></div>
<div class="ab" style="left:846px;top:603px;width:1px;height:22px;background:#a9d3a9"></div>
<div class="ab" style="left:922px;top:603px;width:1px;height:22px;background:#a9d3a9"></div>
<div class="ab" style="left:995px;top:603px;width:1px;height:22px;background:#a9d3a9"></div>
<div class="ab" style="left:1058px;top:603px;width:1px;height:22px;background:#a9d3a9"></div>
<div class="ab" style="left:1135px;top:603px;width:1px;height:22px;background:#a9d3a9"></div>
<div class="t" style="left:265px;top:608px;font-size:11.5px;color:#111">合计 <span style="font-family:'Liberation Serif', serif;font-size:11px">11</span></div>
<div class="ab" style="left:215px;top:625px;width:1040px;height:16px;background:#f0f0f0"></div>
<div class="ab" style="left:231px;top:626px;width:16px;height:14px;background:#cdcdcd"></div>
<svg class="ab" style="left:220px;top:629px" width="6" height="9" viewBox="0 0 6 9"><path d="M5 0.8 L1.3 4.5 L5 8.2" fill="none" stroke="#505050" stroke-width="1.6"/></svg>
<svg class="ab" style="left:1244px;top:629px" width="6" height="9" viewBox="0 0 6 9"><path d="M1 0.8 L4.7 4.5 L1 8.2" fill="none" stroke="#505050" stroke-width="1.6"/></svg>
<div class="ab" style="left:1101px;top:566px;width:131px;height:22px;background:#fff;border:1px solid #c6d2de"></div>
<svg class="ab" style="left:1079px;top:563px" width="27" height="26" viewBox="0 0 27 26"><path d="M3 5 Q2.5 2.5 5 2 L20 0.5 Q23 0.3 23.5 3 L26 20 Q26.3 22.5 24 23 L7 25.5 Q4.5 25.8 4 23.5Z" fill="#3cb521"/><path d="M20 6.5 Q16 4.5 11 5.5 Q6 6.8 7 10.5 Q8 13.2 13.5 13 Q18.5 12.8 18.8 15.5 Q18.8 18 14 18.8 Q9.5 19.5 6.5 17.5" fill="none" stroke="#fff" stroke-width="3.6" stroke-linecap="round"/></svg>
<div class="t" style="left:1110px;top:568px;font-size:14px;font-weight:bold;color:#4a4e5c">五</div>
<svg class="ab" style="left:1132px;top:569px" width="13" height="14" viewBox="0 0 13 14"><path d="M9 0.5 A7 7 0 1 1 0.5 10 A6 6 0 0 0 9 0.5Z" fill="#4a4e5c"/></svg>
<div class="t" style="left:1152px;top:567px;font-size:14px;font-weight:bold;color:#4a4e5c">°,</div>
<svg class="ab" style="left:1171px;top:571px" width="15" height="11" viewBox="0 0 15 11"><rect x="0.8" y="0.8" width="13.4" height="9.4" rx="1.5" fill="none" stroke="#4a4e5c" stroke-width="1.6"/><path d="M3 3.5h9M3 5.5h9M4 7.8h7" stroke="#4a4e5c" stroke-width="1.1" stroke-dasharray="1.2 0.6"/></svg>
<svg class="ab" style="left:1194px;top:569px" width="12" height="13" viewBox="0 0 12 13"><circle cx="6" cy="3" r="2.8" fill="#4a4e5c"/><path d="M0 10 L2 6.5 H10 L12 10 L10 13 H2Z" fill="#4a4e5c"/></svg>
<svg class="ab" style="left:1213px;top:569px" width="12" height="13" viewBox="0 0 12 13"><circle cx="3" cy="3.3" r="2.9" fill="#4a4e5c"/><circle cx="9" cy="3.3" r="2.9" fill="#4a4e5c"/><circle cx="3" cy="9.6" r="2.9" fill="#4a4e5c"/><circle cx="9" cy="9.6" r="2.9" fill="#4a4e5c"/></svg>
<div class="ab" style="left:0;top:653px;width:1268px;height:23px;background:#f4ffff"></div>
<div class="ab" style="left:0;top:653px;width:197px;height:23px;background:#fff"></div>
<div class="ab" style="left:117px;top:656px;width:1px;height:20px;background:#a0a0a0"></div>
<div class="ab" style="left:197px;top:656px;width:1px;height:20px;background:#c8c8c8"></div>
<div class="t" style="left:5px;top:659px;font-size:11.5px;color:#2020e0">综合管理<span style="font-family:'Liberation Serif', serif;font-size:11px">inv20201229</span></div>
<div class="t" style="left:124px;top:659px;font-size:10.9px;color:#e030d0">人事合同管理</div>
<div class="t" style="left:1173px;top:657px;font-family:'Liberation Mono', monospace;font-size:11.5px;letter-spacing:-1.3px;color:#902020">2020-12-29 admin</div>
<div class="ab" style="left:0;top:676px;width:1268px;height:37px;background:linear-gradient(90deg,#23393f 0%,#223846 35%,#1f3246 55%,#1c2b40 80%,#1b2940 100%)"></div>
<svg class="ab" style="left:15px;top:687px" width="15" height="15" viewBox="0 0 15 15"><path d="M0 2 L6.6 1.1 V7 H0Z M7.4 1 L15 0 V7 H7.4Z M0 7.8 H6.6 V13.8 L0 13Z M7.4 7.8 H15 V15 L7.4 14Z" fill="#fff"/></svg>
<svg class="ab" style="left:59px;top:687px" width="16" height="16" viewBox="0 0 16 16"><circle cx="10" cy="6" r="5" fill="none" stroke="#fff" stroke-width="1.3"/><path d="M6.4 9.6 L0.8 15.2" stroke="#fff" stroke-width="1.4"/></svg>
<div class="ab" style="left:104px;top:688px;width:14px;height:14px;border-radius:50%;border:2px solid #fff"></div>
<svg class="ab" style="left:149px;top:682px" width="19" height="23" viewBox="0 0 19 23"><ellipse cx="9.5" cy="9" rx="6.5" ry="8" fill="#111"/><ellipse cx="9.5" cy="15" rx="7.5" ry="7" fill="#111"/><ellipse cx="9.5" cy="16" rx="5.5" ry="5.5" fill="#fff"/><path d="M2.5 11.5 Q9.5 14 16.5 11.5 L16.5 13 Q9.5 15.5 2.5 13Z" fill="#e02020"/><path d="M5 13 L6 17 L8 13Z" fill="#e02020"/><ellipse cx="9.5" cy="9.5" rx="3" ry="1.6" fill="#f0a818"/><ellipse cx="7.3" cy="6" rx="1.3" ry="1.8" fill="#fff"/><ellipse cx="11.7" cy="6" rx="1.3" ry="1.8" fill="#fff"/><ellipse cx="5.5" cy="21.5" rx="3" ry="1.3" fill="#f0a818"/><ellipse cx="13.5" cy="21.5" rx="3" ry="1.3" fill="#f0a818"/></svg>
<svg class="ab" style="left:192px;top:682px" width="24" height="24" viewBox="0 0 17 17"><path d="M8 6.3 H11.5 M9.5 6.3 V11.8 L11.3 12.6" stroke="#9a9a9a" stroke-width="1.1" fill="none"/><rect x="1.6" y="2.1" width="6" height="4.6" transform="rotate(-45 4.6 4.4)" fill="#f2f000" stroke="#202020" stroke-width="0.7"/><rect x="11" y="4.7" width="4.6" height="3.2" transform="rotate(-45 13.3 6.3)" fill="#e000a0" stroke="#202020" stroke-width="0.7"/><rect x="9.9" y="11.6" width="4.6" height="3.2" transform="rotate(-40 12.2 13.2)" fill="#10d0d8" stroke="#202020" stroke-width="0.7"/></svg>
<svg class="ab" style="left:237px;top:681px" width="24" height="25" viewBox="0 0 24 25"><defs><linearGradient id="ieg" x1="0" y1="0" x2="0" y2="1"><stop offset="0" stop-color="#7ad8f8"/><stop offset="1" stop-color="#1e90d8"/></linearGradient></defs><circle cx="13.8" cy="13.5" r="9" fill="url(#ieg)"/><ellipse cx="14" cy="11" rx="4.6" ry="2.3" fill="#223640"/><path d="M9 14.6 H23 V18.2 H16.5 Q13 18.5 10.5 16.5Z" fill="#223640"/><path d="M8.5 15.2 H23" stroke="#223640" stroke-width="1.2"/><path d="M4 23.5 Q-1 20 5 11 Q12 3 21 1.5 Q24 2 22 6" fill="none" stroke="#f0c030" stroke-width="2"/></svg>
<svg class="ab" style="left:283px;top:682px" width="24" height="24" viewBox="0 0 24 24"><defs><linearGradient id="g36" x1="0" y1="0" x2="0" y2="1"><stop offset="0" stop-color="#9be858"/><stop offset="1" stop-color="#3aa820"/></linearGradient></defs><circle cx="12" cy="12.3" r="9.6" fill="url(#g36)" stroke="#e4e4e4" stroke-width="1.4"/><path d="M7 11 Q12 4 17 11Z" fill="#fff"/><path d="M6.5 13.5 H18.5 Q17 18 12 18 Q8 18 6.5 13.5Z" fill="#fff"/><path d="M21 2.5 Q12 5 9 12 Q7 18 5.5 22.5" fill="none" stroke="#2e9a20" stroke-width="1.3"/></svg>
<div class="ab" style="left:277px;top:710px;width:37px;height:3px;background:#76b9ed"></div>
<svg class="ab" style="left:330px;top:685px" width="21" height="18" viewBox="0 0 21 18"><path d="M0 1 H8 L10 3 H21 V17 H0Z" fill="#f0b800"/><rect x="0" y="5" width="21" height="12" fill="#ffd24a"/><rect x="6" y="10" width="9" height="7" fill="#3a8ed8"/><rect x="9" y="13" width="3" height="4" fill="#ffd24a"/></svg>
<svg class="ab" style="left:375px;top:683px" width="23" height="23" viewBox="0 0 23 23"><circle cx="11.5" cy="11.5" r="11" fill="#2f8ee6"/><path d="M5 8 Q12 9 17 7 L14 12 L15.5 12 L11 18 L12 13 Q8 12 5 8Z" fill="#fff"/></svg>
<div class="ab" style="left:420px;top:683px;width:23px;height:22px;border-radius:2px;background:linear-gradient(#8cbcf0,#3a78d0 60%,#2a5fb8)"></div>
<div class="t" style="left:425px;top:684px;font-size:19px;font-style:italic;font-weight:bold;color:#1a3a78">S</div>
<svg class="ab" style="left:466px;top:684px" width="23" height="20" viewBox="0 0 23 20"><ellipse cx="8.5" cy="7.5" rx="8.3" ry="7" fill="#3cc850"/><path d="M3 12 L2.5 15.5 L6.5 13Z" fill="#3cc850"/><ellipse cx="15.5" cy="12.5" rx="7" ry="6" fill="#eeeeee"/><path d="M19 17 L20.5 19.5 L16 17.5Z" fill="#eee"/><circle cx="6" cy="6" r="1" fill="#1a5a1a"/><circle cx="11" cy="6" r="1" fill="#1a5a1a"/><circle cx="13" cy="11.5" r="0.9" fill="#777"/><circle cx="18" cy="11.5" r="0.9" fill="#777"/></svg>
<svg class="ab" style="left:511px;top:684px" width="24" height="20" viewBox="0 0 24 20"><path d="M2 3 Q1 10 2 17 Q12 22 23 11 Q23 9 22 8 Q12 -2 2 3Z" fill="#1e9df0"/><path d="M1 3 Q0 10 1 17 L6 17 Q5 10 6 3Z" fill="#f08020"/><path d="M3 4 Q2 10 3 16 Q11 19 19 10 Q11 1 3 4Z" fill="#60c830"/><path d="M7 5.5 V14.5 L15 10Z" fill="#fff"/></svg>
<div class="ab" style="left:546px;top:676px;width:44px;height:37px;background:#4a5a63"></div>
<svg class="ab" style="left:555px;top:682px" width="24" height="24" viewBox="0 0 17 17"><path d="M8 6.3 H11.5 M9.5 6.3 V11.8 L11.3 12.6" stroke="#9a9a9a" stroke-width="1.1" fill="none"/><rect x="1.6" y="2.1" width="6" height="4.6" transform="rotate(-45 4.6 4.4)" fill="#f2f000" stroke="#202020" stroke-width="0.7"/><rect x="11" y="4.7" width="4.6" height="3.2" transform="rotate(-45 13.3 6.3)" fill="#e000a0" stroke="#202020" stroke-width="0.7"/><rect x="9.9" y="11.6" width="4.6" height="3.2" transform="rotate(-40 12.2 13.2)" fill="#10d0d8" stroke="#202020" stroke-width="0.7"/></svg>
<div class="ab" style="left:546px;top:710px;width:44px;height:3px;background:#76b9ed"></div>
<svg class="ab" style="left:602px;top:683px" width="22" height="22" viewBox="0 0 22 22"><rect x="1" y="1" width="19" height="20" fill="#f4f8fc" stroke="#9ab0d0" stroke-width="0.8"/><rect x="1" y="1" width="19" height="3" fill="#5a8ad0"/><text x="2" y="16" font-family="Liberation Sans" font-weight="bold" font-size="13" fill="#1a50b0">W</text><path d="M14 14 L21 18 L16 21Z" fill="#fff" stroke="#aab" stroke-width="0.6"/></svg>
<div class="ab" style="left:595px;top:710px;width:37px;height:3px;background:#76b9ed"></div>
<svg class="ab" style="left:965px;top:686px" width="15" height="17" viewBox="0 0 15 17"><path d="M7.5 0.5 L14.5 3 V8 Q14.5 14 7.5 16.5 Q0.5 14 0.5 8 V3Z" fill="#c8d8c0" stroke="#ddd" stroke-width="0.8"/><path d="M7.5 2.5 L12.5 4.3 V8 Q12.5 12.5 7.5 14.5 Q2.5 12.5 2.5 8 V4.3Z" fill="#48a838"/><path d="M8.5 4 L5 9 H7.5 L6.5 13 L10 7.5 H7.8Z" fill="#fff"/></svg>
<svg class="ab" style="left:987px;top:687px" width="16" height="16" viewBox="0 0 16 16"><circle cx="8" cy="8" r="7.8" fill="#3b96ec"/><path d="M3.5 5 Q8 5.5 12 4.5 L9 12 L8 8Z" fill="#fff"/></svg>
<svg class="ab" style="left:1032px;top:686px" width="15" height="16" viewBox="0 0 15 16"><circle cx="7.5" cy="8" r="7" fill="#7ac943" stroke="#cde" stroke-width="0.8"/><path d="M4 8 H11 M4.5 5.5 Q7.5 3 10.5 5.5 M4.5 10.5 Q7.5 13 10.5 10.5" stroke="#fff" stroke-width="1.5" fill="none"/></svg>
<svg class="ab" style="left:1054px;top:686px" width="16" height="16" viewBox="0 0 16 16"><circle cx="8" cy="8" r="7.6" fill="#f2c800"/><path d="M1 9 Q8 13 15 9 Q13 15 8 15 Q3 15 1 9Z" fill="#3aa030"/><path d="M8 4 V12 M4 8 H12" stroke="#1a5a1a" stroke-width="2.4"/></svg>
<svg class="ab" style="left:1078px;top:686px" width="12" height="17" viewBox="0 0 12 17"><rect x="0" y="0" width="12" height="17" rx="6" fill="#1e7ae6"/><path d="M3 5 L8.5 10.5 L6 13 V4 L8.5 6.5 L3 12" fill="none" stroke="#fff" stroke-width="1.1"/></svg>
<svg class="ab" style="left:1099px;top:689px" width="16" height="11" viewBox="0 0 16 11"><rect x="4.5" y="2.5" width="10" height="6" fill="none" stroke="#fff" stroke-width="1"/><rect x="6" y="4" width="7" height="3" fill="#fff"/><path d="M15 4 V7" stroke="#fff"/><path d="M0 5.5 H3 M2 3 V8" stroke="#fff" stroke-width="1.1"/></svg>
<svg class="ab" style="left:1121px;top:688px" width="16" height="14" viewBox="0 0 16 14"><rect x="4.5" y="0.5" width="11" height="8" fill="none" stroke="#fff"/><rect x="0.5" y="2.5" width="3" height="6" fill="none" stroke="#fff"/><path d="M10 8.5 V12.5 M6 12.5 H14" stroke="#fff"/></svg>
<svg class="ab" style="left:1143px;top:688px" width="16" height="14" viewBox="0 0 16 14"><path d="M0.5 4.5 H3.5 L7.5 1 V13 L3.5 9.5 H0.5Z" fill="none" stroke="#fff"/><path d="M10 4.5 Q11.5 7 10 9.5 M12.5 3 Q15 7 12.5 11" fill="none" stroke="#ddd"/></svg>
<div class="ab" style="left:1172px;top:687px;width:14px;height:15px;background:#30b020;border-radius:2px;transform:rotate(-10deg)"></div>
<div class="t" style="left:1174px;top:687px;font-size:13px;font-weight:bold;font-style:italic;color:#fff">S</div>
<div class="t" style="left:1202px;top:680px;font-size:12px;color:#fff">15:17 周二</div>
<div class="t" style="left:1202px;top:695px;font-size:12.7px;color:#fff">2021/1/12</div>
<div class="ab" style="left:1263px;top:676px;width:1px;height:37px;background:#6a7480"></div>
</body></html>
